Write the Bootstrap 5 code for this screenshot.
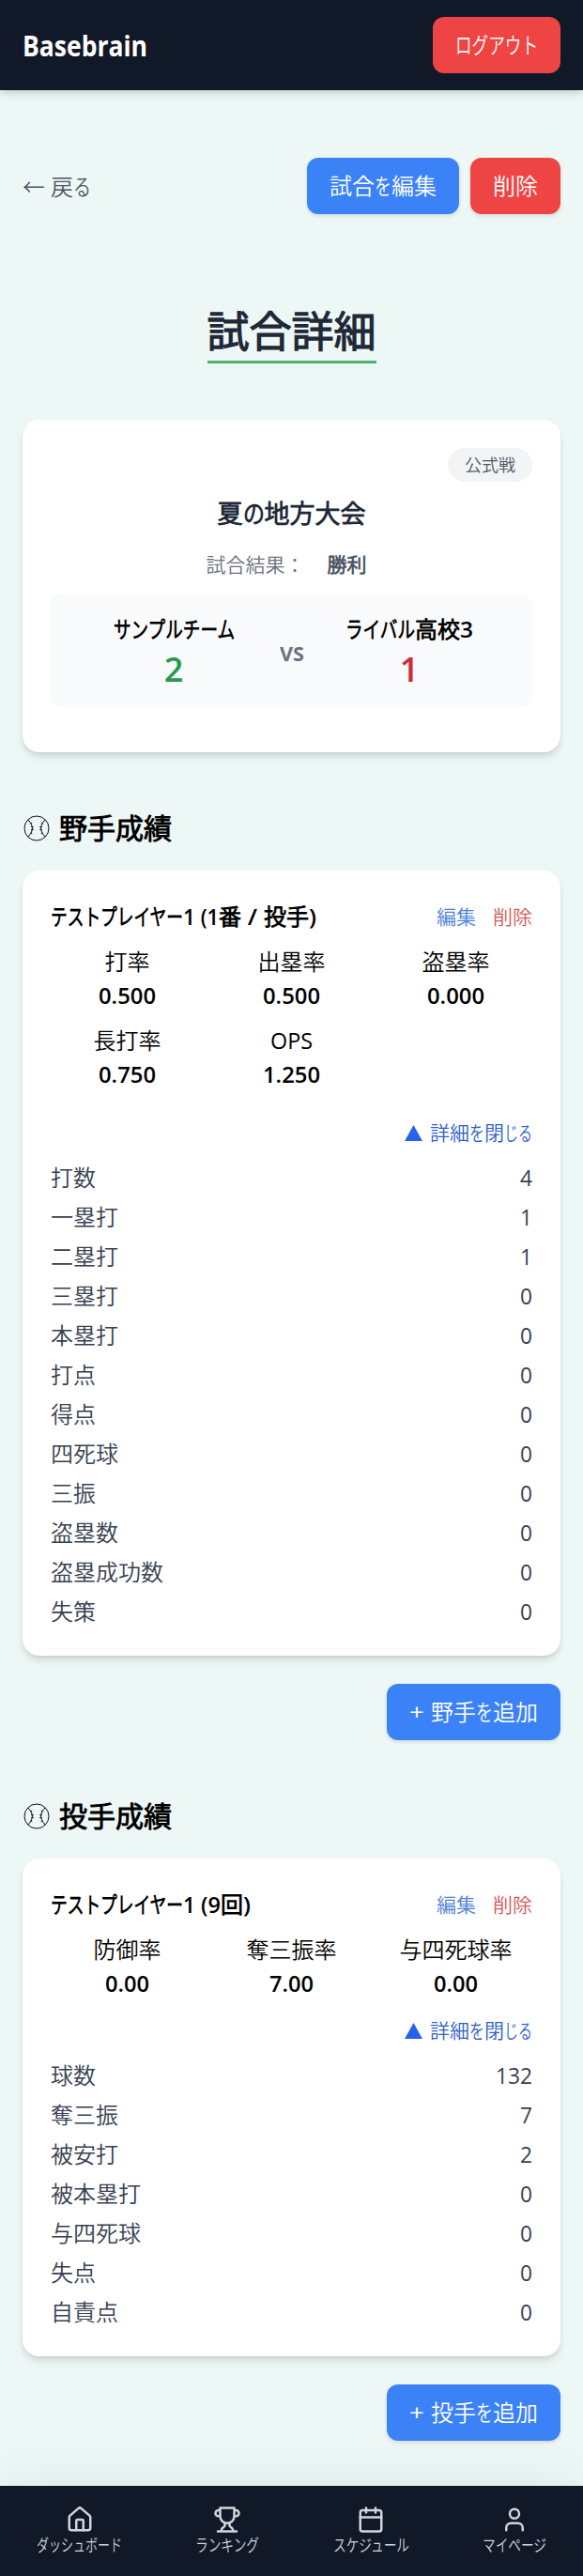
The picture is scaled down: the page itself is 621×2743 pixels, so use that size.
<!DOCTYPE html>
<html lang="ja">
<head>
<meta charset="utf-8">
<meta name="viewport" content="width=device-width, initial-scale=1">
<title>Basebrain - 試合詳細</title>
<link href="https://cdn.jsdelivr.net/npm/bootstrap@5.3.0/dist/css/bootstrap.min.css" rel="stylesheet">
<style>
body{font-family:"Open Sans","Noto Sans CJK JP DemiLight","Noto Sans CJK JP",sans-serif;font-size:24px;line-height:36px;background:#edf8f6;color:#000;font-weight:400}
.topbar{background:#111827;height:96px;padding:0 24px;box-shadow:0 6px 9px -1px rgba(0,0,0,.1),0 3px 6px -2px rgba(0,0,0,.1);position:relative}
.brand{color:#fff;font-size:30px;font-weight:700;line-height:42px;padding-top:2px}
.app-btn{border:0;border-radius:12px;height:60px;padding:12px 24px;font-size:24px;line-height:36px;color:#fff;white-space:nowrap;font-weight:400;box-shadow:0 2px 4px rgba(0,0,0,.12)}
.app-blue{background:#3b82f6}.app-red{background:#ef4444}
.topbar .app-btn{box-shadow:none}
.fit{display:inline-block;white-space:pre;transform-origin:0 50%}
.page{padding:72px 24px 48px}
.back{color:#4b5563;padding-top:2px}
.page-title{font-size:45px;line-height:60px;font-weight:700;color:#1f2937;border-bottom:3px solid #48b46d;width:180px;height:64px;margin:95px auto 60px}
.panel{background:#fff;border-radius:18px;padding:31px 30px 29px;box-shadow:0 6px 9px -1px rgba(0,0,0,.1),0 3px 6px -2px rgba(0,0,0,.1)}
.game{height:354px;padding-top:30px}
.kind{background:#f3f4f6;color:#4b5563;border-radius:18px;height:36px;padding:6px 18px;font-size:18px;line-height:24px;font-weight:500}
.cup{font-size:27px;line-height:42px;font-weight:700;color:#1f2937;margin-top:13px}
.result{font-size:21px;line-height:30px;color:#6b7280;margin-top:18px;padding-right:11px}
.result b{color:#4b5563;font-weight:600}
.score{background:#f9fafb;border-radius:12px;height:120px;margin-top:17px;padding:19px 24px 0}
.team{width:196px;text-align:center;font-weight:600;white-space:nowrap}
.pts{font-size:36px;line-height:50px;font-weight:600}
.versus{font-size:21px;line-height:30px;font-weight:700;color:#6b7280;margin-top:29px;width:55px;text-align:center}
.sec{font-size:30px;line-height:42px;font-weight:700;margin:0 0 24px}
.ball{width:28px;height:28px;margin:0 10px 0 1px}
.who{font-weight:600}
.act{font-size:21px}
.act .e{color:#4f81d6}.act .d{color:#d35757}
.stats{display:grid;grid-template-columns:repeat(3,1fr);gap:12px;text-align:center;margin-top:12px}
.stats b{display:block;font-weight:600}
.toggle{font-size:21px;line-height:30px;color:#2f5fc9;margin:17px 0 15px}
.toggle .tri{width:19px;height:17px;margin-right:8px}
.rows{color:#374151;display:grid;gap:6px}
.rows div{display:flex;justify-content:space-between}
.botbar{background:#111827;height:96px;padding-top:21px;color:#d1d5db;font-size:18px;line-height:24px;box-shadow:0 -12px 45px rgba(0,0,0,.05);position:relative}
.botbar svg{display:block;width:30px;height:30px;margin:0 auto}
</style>
</head>
<body>
<svg class="d-none">
  <symbol id="ball" viewBox="0 0 28 28"><g fill="none" stroke="#111" stroke-width="1"><circle cx="14" cy="14" r="13"/><path d="M5 5Q9.500 9 9.500 14T5 23M23 5Q18.500 9 18.500 14T23 23"/><path stroke-width=".8" d="M6.800 9.300l2.400-1.300M8 12.500h3M8 15.500h3M7 18.700l2.400 1.300M21.200 9.300l-2.400-1.300M20 12.500h-3M20 15.500h-3M21 18.700l-2.400 1.300"/></g></symbol>
  <symbol id="tri" viewBox="0 0 19 17"><path d="M9.500 0L19 17H0z" fill="#2563eb"/></symbol>
</svg>
<header class="topbar d-flex align-items-center justify-content-between">
  <span class="brand"><span class="fit" data-w="133">Basebrain</span></span>
  <button class="btn app-btn app-red"><span class="fit" data-w="88">ログアウト</span></button>
</header>
<main class="page">
  <div class="d-flex align-items-center justify-content-between">
    <span class="back"><span class="fit" data-w="30">← </span>戻<span class="fit" data-w="19">る</span></span>
    <div class="d-flex" style="gap:12px">
      <button class="btn app-btn app-blue">試合<span class="fit" data-w="18">を</span>編集</button>
      <button class="btn app-btn app-red">削除</button>
    </div>
  </div>
  <h1 class="page-title text-center">試合詳細</h1>

  <section class="panel game">
    <div class="d-flex justify-content-end"><span class="kind">公式戦</span></div>
    <div class="cup text-center">夏<span class="fit" data-w="23">の</span>地方大会</div>
    <div class="result text-center">試合結果：<b class="ms-4">勝利</b></div>
    <div class="score d-flex justify-content-center">
      <div class="team"><div><span class="fit" data-w="129">サンプルチーム</span></div><div class="pts" style="color:#279a4f">2</div></div>
      <div class="versus"><span class="fit" data-w="26">VS</span></div>
      <div class="team"><div><span class="fit" data-w="74">ライバル</span>高校<span class="fit" data-w="14">3</span></div><div class="pts" style="color:#cb2f35">1</div></div>
    </div>
  </section>

  <h2 class="sec d-flex align-items-center" style="margin-top:60px"><svg class="ball"><use href="#ball"/></svg>野手成績</h2>
  <section class="panel">
    <div class="d-flex justify-content-between">
      <div class="who"><span class="fit" data-w="141">テストプレイヤー</span><span class="fit" data-w="13">1</span><span class="fit" data-w="25"> (1</span>番<span class="fit" data-w="24"> / </span>投手<span class="fit" data-w="8">)</span></div>
      <div class="act d-flex" style="gap:18px"><span class="e">編集</span><span class="d">削除</span></div>
    </div>
    <div class="stats">
      <div>打率<b><span class="fit" data-w="61">0.500</span></b></div>
      <div>出塁率<b><span class="fit" data-w="61">0.500</span></b></div>
      <div>盗塁率<b><span class="fit" data-w="61">0.000</span></b></div>
      <div>長打率<b><span class="fit" data-w="61">0.750</span></b></div>
      <div><span class="fit" data-w="45">OPS</span><b><span class="fit" data-w="61">1.250</span></b></div>
    </div>
    <div class="toggle d-flex align-items-center justify-content-end" style="margin-top:29px"><svg class="tri"><use href="#tri"/></svg>詳細<span class="fit" data-w="16">を</span>閉<span class="fit" data-w="30">じる</span></div>
    <div class="rows">
      <div><span>打数</span><span class="fit" data-w="13">4</span></div>
      <div><span>一塁打</span><span class="fit" data-w="13">1</span></div>
      <div><span>二塁打</span><span class="fit" data-w="13">1</span></div>
      <div><span>三塁打</span><span class="fit" data-w="13">0</span></div>
      <div><span>本塁打</span><span class="fit" data-w="13">0</span></div>
      <div><span>打点</span><span class="fit" data-w="13">0</span></div>
      <div><span>得点</span><span class="fit" data-w="13">0</span></div>
      <div><span>四死球</span><span class="fit" data-w="13">0</span></div>
      <div><span>三振</span><span class="fit" data-w="13">0</span></div>
      <div><span>盗塁数</span><span class="fit" data-w="13">0</span></div>
      <div><span>盗塁成功数</span><span class="fit" data-w="13">0</span></div>
      <div><span>失策</span><span class="fit" data-w="13">0</span></div>
    </div>
  </section>
  <div class="d-flex justify-content-end" style="margin-top:30px"><button class="btn app-btn app-blue"><span class="fit" data-w="23">+ </span>野手<span class="fit" data-w="18">を</span>追加</button></div>

  <h2 class="sec d-flex align-items-center" style="margin-top:60px"><svg class="ball"><use href="#ball"/></svg>投手成績</h2>
  <section class="panel">
    <div class="d-flex justify-content-between">
      <div class="who"><span class="fit" data-w="141">テストプレイヤー</span><span class="fit" data-w="13">1</span><span class="fit" data-w="27"> (9</span>回<span class="fit" data-w="8">)</span></div>
      <div class="act d-flex" style="gap:18px"><span class="e">編集</span><span class="d">削除</span></div>
    </div>
    <div class="stats">
      <div>防御率<b><span class="fit" data-w="47">0.00</span></b></div>
      <div>奪三振率<b><span class="fit" data-w="47">7.00</span></b></div>
      <div>与四死球率<b><span class="fit" data-w="47">0.00</span></b></div>
    </div>
    <div class="toggle d-flex align-items-center justify-content-end"><svg class="tri"><use href="#tri"/></svg>詳細<span class="fit" data-w="16">を</span>閉<span class="fit" data-w="30">じる</span></div>
    <div class="rows">
      <div><span>球数</span><span class="fit" data-w="39">132</span></div>
      <div><span>奪三振</span><span class="fit" data-w="13">7</span></div>
      <div><span>被安打</span><span class="fit" data-w="13">2</span></div>
      <div><span>被本塁打</span><span class="fit" data-w="13">0</span></div>
      <div><span>与四死球</span><span class="fit" data-w="13">0</span></div>
      <div><span>失点</span><span class="fit" data-w="13">0</span></div>
      <div><span>自責点</span><span class="fit" data-w="13">0</span></div>
    </div>
  </section>
  <div class="d-flex justify-content-end" style="margin-top:30px"><button class="btn app-btn app-blue"><span class="fit" data-w="23">+ </span>投手<span class="fit" data-w="18">を</span>追加</button></div>
</main>
<nav class="botbar d-flex justify-content-around text-center">
  <div><svg viewBox="0 0 24 24" fill="none" stroke="currentColor" stroke-width="2" stroke-linecap="round" stroke-linejoin="round"><path d="M15 21v-8a1 1 0 0 0-1-1h-4a1 1 0 0 0-1 1v8"/><path d="M3 10a2 2 0 0 1 .709-1.528l7-5.999a2 2 0 0 1 2.582 0l7 5.999A2 2 0 0 1 21 10v9a2 2 0 0 1-2 2H5a2 2 0 0 1-2-2z"/></svg><span class="fit" data-w="91">ダッシュボード</span></div>
  <div><svg viewBox="0 0 24 24" fill="none" stroke="currentColor" stroke-width="2" stroke-linecap="round" stroke-linejoin="round"><path d="M6 9H4.500a2.500 2.500 0 0 1 0-5H6M18 9h1.500a2.500 2.500 0 0 0 0-5H18M4 22h16M10 14.660V17c0 .55-.47.98-.97 1.210C7.850 18.750 7 20.240 7 22M14 14.660V17c0 .55.47.98.97 1.210C16.150 18.750 17 20.240 17 22M18 2H6v7a6 6 0 0 0 12 0V2Z"/></svg><span class="fit" data-w="68">ランキング</span></div>
  <div><svg viewBox="0 0 24 24" fill="none" stroke="currentColor" stroke-width="2" stroke-linecap="round" stroke-linejoin="round"><path d="M8 2v4M16 2v4M3 10h18"/><rect x="3" y="4" width="18" height="18" rx="2"/></svg><span class="fit" data-w="81">スケジュール</span></div>
  <div><svg viewBox="0 0 24 24" fill="none" stroke="currentColor" stroke-width="2" stroke-linecap="round" stroke-linejoin="round"><path d="M19 21v-2a4 4 0 0 0-4-4H9a4 4 0 0 0-4 4v2"/><circle cx="12" cy="7" r="4"/></svg><span class="fit" data-w="68">マイページ</span></div>
</nav>
<script src="https://cdn.jsdelivr.net/npm/bootstrap@5.3.0/dist/js/bootstrap.bundle.min.js"></script>
<script>
document.querySelectorAll('.fit').forEach(function (el) {
  var natural = el.getBoundingClientRect().width, w = +el.dataset.w;
  el.style.transform = 'scaleX(' + (w / natural) + ')';
  el.style.marginRight = (w - natural) + 'px';
});
</script>
</body>
</html>
